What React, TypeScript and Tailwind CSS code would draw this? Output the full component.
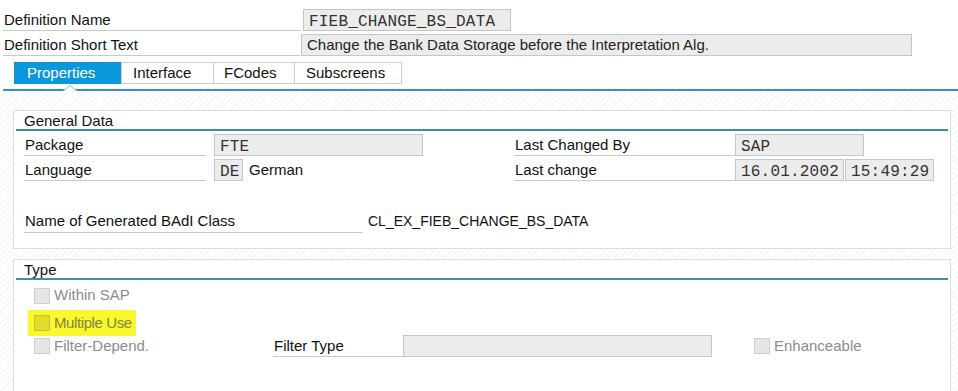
import React from "react";

const sans = "font-['Liberation_Sans',Arial,sans-serif]";
const mono = "font-['Liberation_Mono','Courier_New',monospace]";

function Label({ text, width }: { text: string; width: string }) {
  return (
    <div className={`${width} shrink-0 h-[22px] flex items-center pl-[1px] pt-[1px] border-b border-[#c9c9c9] text-[#111] whitespace-nowrap`}>
      {text}
    </div>
  );
}

function Field({ value, width, monoFont = true }: { value: string; width: string; monoFont?: boolean }) {
  return (
    <div
      className={`${width} shrink-0 h-[22px] flex items-center px-[5px] bg-[#ececec] border border-[#c6c6c6] text-[#222] whitespace-nowrap ${
        monoFont ? `${mono} text-[16px] tracking-[0.2px] text-[#333] pt-[3px]` : "pt-[1px]"
      }`}
    >
      {value}
    </div>
  );
}

function Check({ text }: { text: string }) {
  return (
    <div className="flex items-center gap-[4px] text-[#8c8c8c] whitespace-nowrap">
      <span className="w-[16px] h-[16px] shrink-0 bg-[#e6e6e6] border border-[#cfcfcf]" />
      <span>{text}</span>
    </div>
  );
}

function Panel({ title, children, className = "" }: { title: string; children: React.ReactNode; className?: string }) {
  return (
    <div className={`w-[938px] bg-white border border-[#dedede] px-[2px] ${className}`}>
      <div className="h-[18px] pl-[8px] flex items-end text-[#111] leading-none pb-[1px]">{title}</div>
      <div className="h-[2px] bg-[#3a8ea6]" />
      {children}
    </div>
  );
}

export default function App() {
  return (
    <div className={`w-[958px] h-[391px] overflow-hidden bg-white ${sans} text-[15px]`}>
      <div className="pt-[9px] pl-[3px]">
        <div className="flex">
          <Label text="Definition Name" width="w-[297px]" />
          <div className="ml-[3px]">
            <Field value="FIEB_CHANGE_BS_DATA" width="w-[208px]" />
          </div>
        </div>
        <div className="flex mt-[3px]">
          <Label text="Definition Short Text" width="w-[297px]" />
          <div className="ml-[1px]">
            <Field value="Change the Bank Data Storage before the Interpretation Alg." width="w-[611px]" monoFont={false} />
          </div>
        </div>
      </div>

      <div className="flex ml-[14px] mt-[6px] h-[22px]">
        <div className="w-[107px] bg-[#0b98db] text-white flex items-center pl-[13px]">Properties</div>
        <div className="w-[93px] border border-[#cfcfcf] flex items-center pl-[11px] text-[#111]">Interface</div>
        <div className="w-[81px] border border-l-0 border-[#cfcfcf] flex items-center pl-[10px] text-[#111]">FCodes</div>
        <div className="w-[107px] border border-l-0 border-[#cfcfcf] flex items-center pl-[11px] text-[#111]">Subscreens</div>
      </div>

      <div className="relative ml-[3px] mt-[5px] h-[2px] bg-[#3b8fb6]">
        <svg className="absolute left-[60px] top-[-5px]" width="14" height="7" viewBox="0 0 14 7">
          <path d="M0 7 L7 1 L14 7 Z" fill="#ffffff" />
          <path d="M1 6.5 L7 1.5 L13 6.5" fill="none" stroke="#8fb9cc" strokeWidth="1" />
        </svg>
      </div>

      <div className="h-[300px] pl-[13px] pt-[19px] bg-[repeating-linear-gradient(135deg,#f2f6f8_0px,#f2f6f8_1px,#ffffff_1px,#ffffff_4px)]">
        <Panel title="General Data" className="h-[139px]">
          <div className="flex mt-[3px] pl-[8px]">
            <div className="w-[490px] shrink-0">
              <div className="flex">
                <Label text="Package" width="w-[182px]" />
                <div className="ml-[8px]">
                  <Field value="FTE" width="w-[209px]" />
                </div>
              </div>
              <div className="flex mt-[3px]">
                <Label text="Language" width="w-[182px]" />
                <div className="ml-[8px] flex items-center">
                  <Field value="DE" width="w-[29px]" />
                  <span className="ml-[6px] text-[#111]">German</span>
                </div>
              </div>
              <div className="flex mt-[29px]">
                <Label text="Name of Generated BAdI Class" width="w-[339px]" />
                <div className="ml-[5px] h-[22px] flex items-center text-[#111] text-[14px] whitespace-nowrap">
                  CL_EX_FIEB_CHANGE_BS_DATA
                </div>
              </div>
            </div>
            <div>
              <div className="flex">
                <Label text="Last Changed By" width="w-[221px]" />
                <Field value="SAP" width="w-[129px]" />
              </div>
              <div className="flex mt-[3px]">
                <Label text="Last change" width="w-[221px]" />
                <Field value="16.01.2002" width="w-[109px]" />
                <div className="ml-[1px]">
                  <Field value="15:49:29" width="w-[89px]" />
                </div>
              </div>
            </div>
          </div>
        </Panel>

        <Panel title="Type" className="mt-[10px] h-[140px]">
          <div className="pl-[18px] pt-[6px]">
            <div className="h-[19px] flex items-center">
              <Check text="Within SAP" />
            </div>
            <div className="mt-[5px] -ml-[6px] w-[108px] h-[26px] bg-[#f8f82c] flex items-center pl-[6px] whitespace-nowrap">
              <div className="flex items-center gap-[4px] text-[#85853a] tracking-[-0.4px]">
                <span className="w-[16px] h-[16px] shrink-0 bg-[#dede2a] border border-[#c2c232]" />
                <span>Multiple Use</span>
              </div>
            </div>
            <div className="flex items-center h-[22px] -mt-[1px]">
              <div className="w-[239px]">
                <Check text="Filter-Depend." />
              </div>
              <Label text="Filter Type" width="w-[130px]" />
              <Field value="" width="w-[309px]" />
              <div className="ml-[42px]">
                <Check text="Enhanceable" />
              </div>
            </div>
          </div>
        </Panel>
      </div>
    </div>
  );
}
